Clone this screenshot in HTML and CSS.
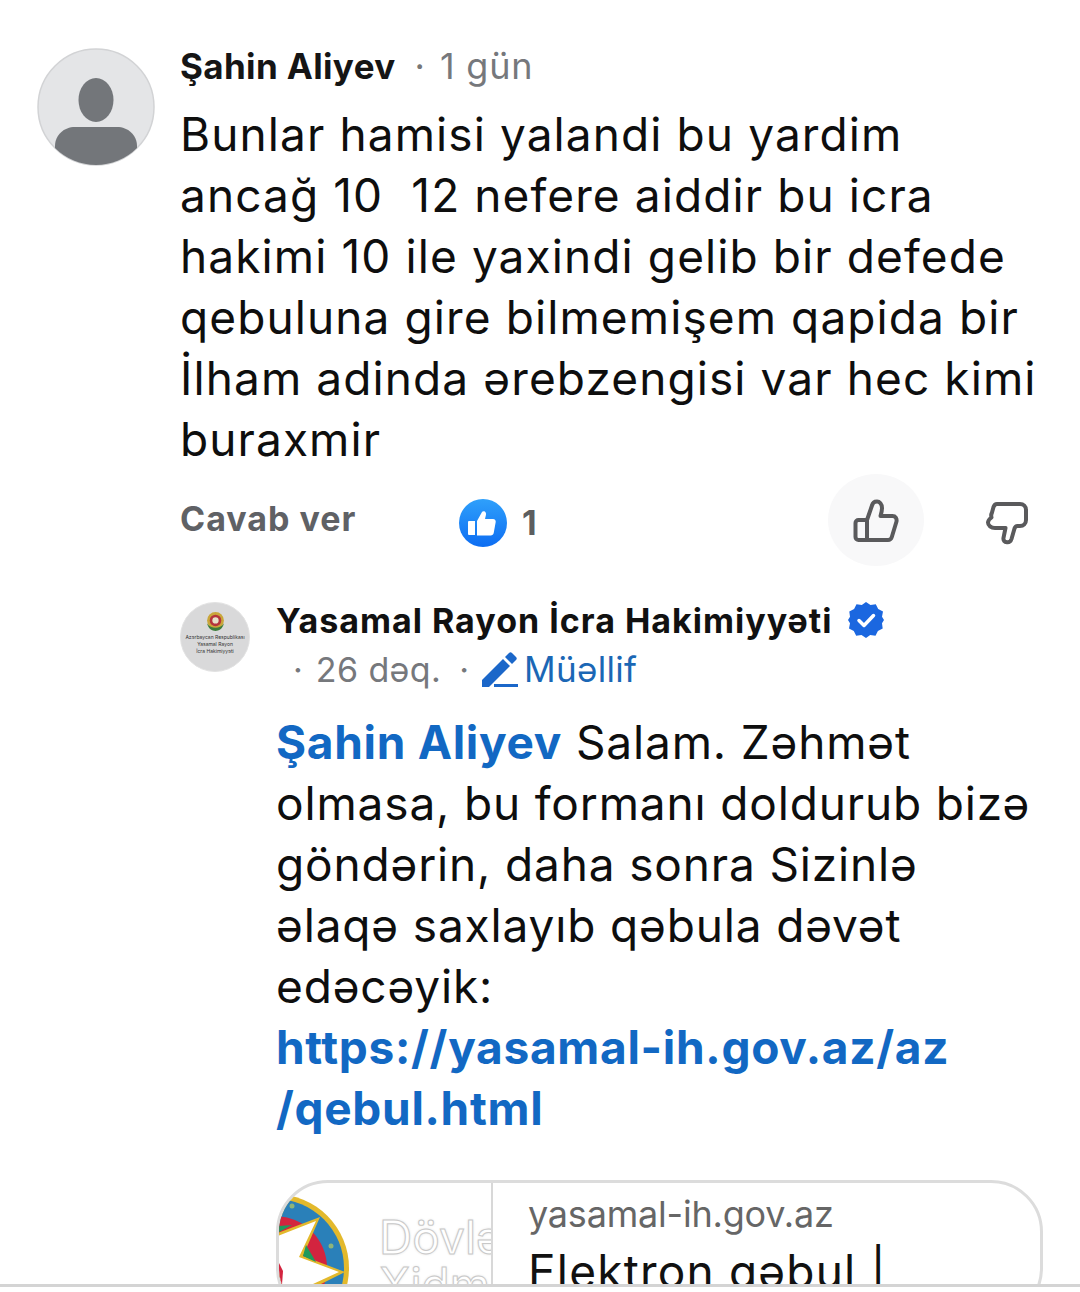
FILE: index.html
```html
<!DOCTYPE html>
<html lang="az">
<head>
<meta charset="utf-8">
<title>Şərhlər</title>
<link rel="stylesheet" href="styles.css">
</head>
<body>
<main class="page">
  <article class="comment">
    <svg class="avatar" viewBox="0 0 118 118">
      <defs><clipPath id="av"><circle cx="59" cy="59" r="58"/></clipPath></defs>
      <circle cx="59" cy="59" r="58" fill="#e4e5e7" stroke="#d2d3d5" stroke-width="1.5"/>
      <g clip-path="url(#av)" fill="#73767a">
        <ellipse cx="59" cy="52" rx="17.5" ry="22"/>
        <path d="M18 118V98c0-11 9-19 20-19h42c11 0 20 8 20 19v20z"/>
      </g>
    </svg>
    <div class="body">
      <div class="meta"><span class="name">Şahin Aliyev</span><span class="dot">·</span><span class="time">1 gün</span></div>
      <p class="text">Bunlar hamisi yalandi bu yardim<br>ancağ 10&nbsp; 12 nefere aiddir bu icra<br>hakimi 10 ile yaxindi gelib bir defede<br>qebuluna gire bilmemişem qapida bir<br>İlham adinda ərebzengisi var hec kimi<br>buraxmir</p>
      <div class="actions">
        <span class="reply">Cavab ver</span>
        <span class="reaction">
          <svg class="like-badge" viewBox="0 0 48 48">
            <defs><linearGradient id="lg" x1="0" y1="0" x2="0" y2="1"><stop offset="0" stop-color="#2fa0fb"/><stop offset="1" stop-color="#0d6df2"/></linearGradient></defs>
            <circle cx="24" cy="24" r="24" fill="url(#lg)"/>
            <path fill="#fff" d="M10 22h6v14h-6a1 1 0 0 1-1-1V23a1 1 0 0 1 1-1zM18 22l5-9c.6-1 3.600-1.200 4 1.500.2 1.600-.6 3.500-1 5.500h8c2 0 3 1.500 2.700 3l-2 11c-.3 1.500-1.400 2.500-3 2.500H18z"/>
          </svg>
          <span class="count">1</span>
        </span>
        <span class="vote-btn vote-up">
          <svg class="vote" viewBox="0 0 48 48"><path fill="none" stroke="#5a5a5c" stroke-width="4" stroke-linejoin="round" stroke-linecap="round" d="M15 21H6.500a3 3 0 0 0-3 3v14a3 3 0 0 0 3 3H36c2 0 3.200-1 3.800-3L44.500 22.500c.5-3-1-5.500-4-5.500H28.500c.8-2.500 1.500-5 1.500-8 0-4-2.500-6.500-5-6.500-2.500 0-4.500 1.500-5 4L15 21v20"/></svg>
        </span>
        <span class="vote-btn">
          <svg class="vote" viewBox="0 0 48 48"><path fill="none" stroke="#5a5a5c" stroke-width="4" stroke-linejoin="round" stroke-linecap="round" d="M14 5H37c3.500 0 6 2.500 6 6v10c0 3.500-2.500 6-6 6h-2.500c-1.500 0-2.500 1-3 2.500L28.500 40c-.8 2.500-2.500 3.500-4.500 3.300-2.500-.3-4-2-3.500-4.500L22.500 29H12c-4 0-7-2.500-7-5.500 0-2 1.500-3.500 3.500-5-.5-1.500-.5-3 .5-5L10.500 8c.7-2 2-3 3.500-3z"/></svg>
        </span>
      </div>
    </div>
  </article>

  <article class="reply-thread">
    <div class="org-logo">
      <svg class="emblem" viewBox="0 0 20 20">
        <circle cx="10" cy="9" r="8" fill="#c9a63a"/>
        <circle cx="10" cy="9" r="5.500" fill="#b5353c"/>
        <circle cx="10" cy="9" r="3" fill="#e8e2c8"/>
        <path d="M2 12c1 5 5 7 8 7s7-2 8-7c-2 3-5 4-8 4s-6-1-8-4z" fill="#3c7d3a"/>
      </svg>
      <span class="org-caption">Azərbaycan Respublikası<br>Yasamal Rayon<br>İcra Hakimiyyəti</span>
    </div>
    <div class="reply-body">
      <div class="org-line"><span class="org-name">Yasamal Rayon İcra Hakimiyyəti</span>
        <svg class="verified" viewBox="0 0 36 36">
          <path fill="#1b67e0" d="M18 0l4.500 3 5.300-.7 2.400 4.800 4.800 2.400L34 14.800l2 3.200-2 3.200.7 5.300-4.800 2.400-2.400 4.800-5.300-.7L18 36l-4.500-3-5.300.7-2.400-4.800L1 26.500 2 21.200 0 18l2-3.200L1.300 9.500l4.800-2.400 2.400-4.800 5.300.7z"/>
          <path fill="none" stroke="#fff" stroke-width="3.500" stroke-linecap="round" stroke-linejoin="round" d="M11 18.500l5 5 9.500-10"/>
        </svg>
      </div>
      <div class="meta-line"><span class="dot-small">·</span><span class="time">26 dəq.</span><span class="dot-small">·</span>
        <span class="author">
          <svg class="pen" viewBox="0 0 36 36"><path fill="#1b67c9" d="M0 36v-7L21 8l7 7L7 36zM23 6l4-4c1-1 2-1 3 0l4 4c1 1 1 2 0 3l-4 4z"/><rect x="12" y="33" width="24" height="3" fill="#1b67c9"/></svg>Müəllif
        </span>
      </div>
      <p class="text reply-text"><span class="mention">Şahin Aliyev</span> Salam. Zəhmət<br>olmasa, bu formanı doldurub bizə<br>göndərin, daha sonra Sizinlə<br>əlaqə saxlayıb qəbula dəvət<br>edəcəyik:<br><a class="mention" href="#">https://yasamal-ih.gov.az/az<br>/qebul.html</a></p>
      <div class="card">
        <div class="thumb">
          <svg class="star-logo" viewBox="0 0 76 110">
            <circle cx="-4" cy="85" r="74" fill="#e3b92c"/>
            <circle cx="-4" cy="85" r="69" fill="#2a80b9"/>
            <circle cx="-4" cy="85" r="52" fill="#d3243f"/>
            <path d="M-4 51L41 34 24 73 66 89 36 104 -4 110z" fill="#e3b92c"/>
            <path d="M-4 54L37 38 20 74 60 89 34 101 -4 108z" fill="#fff"/>
            <circle cx="13" cy="23" r="2.500" fill="#8db47a"/>
            <circle cx="52" cy="63" r="2.500" fill="#8db47a"/>
            <path d="M27 62l10 17-13-6z" fill="#1f9a5c"/>
            <path d="M0 43l13-1-13 7z" fill="#1f9a5c"/>
            <path d="M0 80l4 8-1 14H0z" fill="#d3243f"/>
          </svg>
          <span class="ghost-text">Dövlət<br>Xidməti</span>
        </div>
        <div class="card-info">
          <div class="domain">yasamal-ih.gov.az</div>
          <div class="card-title">Elektron qəbul |</div>
        </div>
      </div>
    </div>
  </article>
</main>
<div class="bottom-rule"></div>
</body>
</html>
```

FILE: styles.css
```css
* { box-sizing: border-box; }
html, body { margin: 0; background: #fff; }
body { height: 1292px; overflow: hidden; font-family: Inter, Roboto, sans-serif; color: #0b0b0b; }
.page { height: 1284px; overflow: hidden; padding: 45px 0 0 37px; }
.comment { display: flex; gap: 25px; }
.avatar { width: 118px; height: 118px; flex: none; margin-top: 3px; }
.body { flex: 1; min-width: 0; }
.meta { display: flex; align-items: baseline; height: 43px; line-height: 43px; }
.name { font-weight: 700; font-size: 35px; letter-spacing: .35px; color: #151515; }
.dot { margin: 0 15px 0 19px; color: #777; font-size: 36px; }
.time { color: #76787c; font-size: 36px; letter-spacing: .8px; }
.text { margin: 0; font-size: 46px; letter-spacing: 1.1px; line-height: 61px; color: #0e0e0e; white-space: nowrap; }
.body > .text { margin-top: 16px; }
.actions { display: flex; align-items: center; height: 92px; margin-top: 4px; }
.reply { font-size: 34px; font-weight: 700; letter-spacing: 1px; color: #5f6165; width: 279px; margin-top: -4px; }
.reaction { display: flex; align-items: center; gap: 15px; width: 369px; margin-top: 5px; }
.like-badge { width: 48px; height: 48px; }
.count { font-size: 34px; font-weight: 700; color: #5c5e60; }
.vote-btn { display: flex; align-items: center; justify-content: center; width: 96px; height: 92px; border-radius: 50%; padding-top: 6px; }
.vote-up { background: #f8f8f9; margin-right: 35px; }
.vote { width: 48px; height: 48px; }
.reply-thread { display: grid; grid-template-columns: 70px 1fr; column-gap: 26px; padding-left: 143px; margin-top: 33px; }
.org-logo { width: 70px; height: 70px; border-radius: 50%; background: #d9d9da; border: 1px solid #e2e2e2; display: flex; flex-direction: column; align-items: center; padding-top: 8px; margin-top: 3px; }
.emblem { width: 21px; height: 21px; }
.org-caption { font-size: 5px; line-height: 7px; text-align: center; color: #333; white-space: nowrap; margin-top: 2px; }
.reply-body { min-width: 0; }
.org-line { display: flex; align-items: center; gap: 15px; height: 42px; }
.org-name { font-size: 34px; font-weight: 700; letter-spacing: 1px; color: #111; white-space: nowrap; }
.verified { width: 36px; height: 36px; }
.meta-line { display: flex; align-items: center; height: 56px; }
.meta-line .time { font-size: 34px; letter-spacing: .4px; }
.dot-small { color: #76787c; font-size: 34px; margin: 0 13px 0 18px; }
.meta-line .dot-small:first-child { margin-left: 17px; }
.author { display: flex; align-items: center; color: #1b67b5; font-size: 35px; letter-spacing: .3px; }
.pen { width: 36px; height: 36px; margin-right: 6px; }
.reply-text { margin-top: 15px; letter-spacing: .85px; }
.mention { color: #1268c3; font-weight: 700; letter-spacing: .7px; text-decoration: none; }
.card { display: flex; width: 767px; height: 140px; margin-top: 41px; border: 3px solid #dcdcdc; border-radius: 52px; overflow: hidden; }
.thumb { width: 214px; flex: none; border-right: 2px solid #d8d8d8; display: flex; position: relative; overflow: hidden; }
.star-logo { width: 76px; height: 110px; flex: none; }
.ghost-text { position: absolute; left: 100px; top: 31px; font-size: 46px; line-height: 47px; color: #fff; -webkit-text-stroke: 1px #c8c8c8; text-shadow: 0 0 3px #d8d8d8; white-space: nowrap; }
.card-info { padding: 9px 0 0 35px; white-space: nowrap; }
.domain { font-size: 36px; letter-spacing: -.2px; line-height: 44px; color: #666; }
.card-title { font-size: 46px; line-height: 62px; letter-spacing: 1.2px; color: #111; margin-top: 4px; }
.bottom-rule { height: 3px; background: #d4d4d4; }
```
